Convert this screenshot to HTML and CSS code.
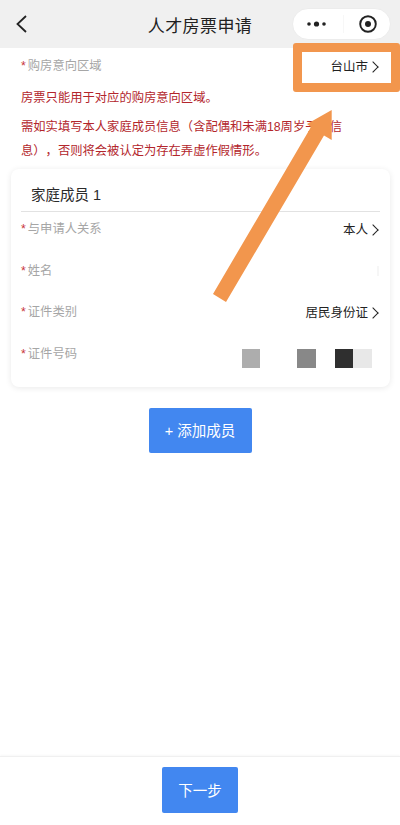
FILE: index.html
```html
<!DOCTYPE html>
<html lang="zh-CN">

<head>
    <meta charset="UTF-8">
    <meta name="viewport" content="width=device-width, initial-scale=1.0">
    <title>人才房票申请</title>
    <link rel="stylesheet" href="styles.css">
</head>

<body>
    <div class="navbar">
        <svg class="back" width="14" height="20" viewBox="0 0 14 20">
            <path d="M11 2 L2.5 10 L11 18" fill="none" stroke="#222" stroke-width="1.8" />
        </svg>
        <div class="navtitle">人才房票申请</div>
        <div class="capsule">
            <svg width="22" height="8" viewBox="0 0 22 8">
                <circle cx="3" cy="4" r="1.8" fill="#222" />
                <circle cx="10.5" cy="4" r="2.6" fill="#222" />
                <circle cx="18" cy="4" r="1.8" fill="#222" />
            </svg>
            <span class="capline"></span>
            <svg width="20" height="20" viewBox="0 0 20 20">
                <circle cx="10" cy="10" r="7.8" fill="none" stroke="#222" stroke-width="1.9" />
                <circle cx="10" cy="10" r="3" fill="#222" />
            </svg>
        </div>
    </div>

    <div class="content">
        <div class="row regionrow">
            <div class="label"><span class="star">*</span>购房意向区域</div>
            <div class="value">台山市<span class="arrow"></span></div>
        </div>
        <p class="notice first">房票只能用于对应的购房意向区域。</p>
        <p class="notice">需如实填写本人家庭成员信息（含配偶和未满18周岁子女信息），否则将会被认定为存在弄虚作假情形。</p>

        <div class="card">
            <div class="cardtitle">家庭成员 1</div>
            <div class="row">
                <div class="label"><span class="star">*</span>与申请人关系</div>
                <div class="value">本人<span class="arrow"></span></div>
            </div>
            <div class="row">
                <div class="label"><span class="star">*</span>姓名</div>
                <span class="faint"></span>
            </div>
            <div class="row">
                <div class="label"><span class="star">*</span>证件类别</div>
                <div class="value">居民身份证<span class="arrow"></span></div>
            </div>
            <div class="row">
                <div class="label"><span class="star">*</span>证件号码</div>
                <div class="mosaic">
                    <span class="block b1"></span>
                    <span class="block b2"></span>
                    <span class="block b3"></span>
                    <span class="block b4"></span>
                </div>
            </div>
        </div>

        <div class="addwrap">
            <button class="btn addbtn">+ 添加成员</button>
        </div>
    </div>

    <div class="footer">
        <button class="btn nextbtn">下一步</button>
    </div>

    <!-- 标注：橙色框和箭头 -->
    <div class="markbox"></div>
    <svg class="markarrow" width="400" height="825" viewBox="0 0 400 825">
        <polygon points="331.7,110 331.7,140 324,135.5 226,302 213,294 311,127 307,124" fill="#f2964d" />
    </svg>
</body>

</html>
```

FILE: styles.css
```css
* {
    box-sizing: border-box;
}

body {
    margin: 0;
    width: 400px;
    height: 825px;
    position: relative;
    overflow: hidden;
    background: #fff;
    font-family: "Liberation Sans", "Noto Sans CJK SC", sans-serif;
    text-spacing-trim: space-all;
    display: flex;
    flex-direction: column;
}

.navbar {
    height: 48px;
    background: #f0f0f0;
    display: flex;
    align-items: center;
    justify-content: space-between;
    padding: 0 9px 0 15px;
    position: relative;
}

.navtitle {
    position: absolute;
    left: 0;
    right: 0;
    text-align: center;
    font-size: 17px;
    letter-spacing: 0.4px;
    color: #222;
}

.capsule {
    position: relative;
    width: 99px;
    height: 32px;
    background: #fff;
    border: 1px solid #ececec;
    border-radius: 16px;
    display: flex;
    align-items: center;
    justify-content: space-between;
    padding: 0 12px 0 13px;
    margin-top: -1px;
}

.capline {
    width: 1px;
    height: 18px;
    background: #f7f7f7;
}

.content {
    flex: 1;
    padding: 8px 10px 0;
}

.row {
    display: flex;
    justify-content: space-between;
    align-items: flex-start;
    height: 41.5px;
    padding: 7px 12px 0 10px;
}

.regionrow {
    height: 24px;
    padding: 1px 12px 0 11px;
}

.label {
    font-size: 12.3px;
    line-height: 18px;
    color: #a6a6a6;
}

.star {
    color: #c8343a;
    margin-right: 2px;
}

.value {
    font-size: 12.5px;
    line-height: 20px;
    color: #222;
    display: flex;
    align-items: center;
}

.arrow {
    width: 8px;
    height: 8px;
    border-top: 1px solid #222;
    border-right: 1px solid #222;
    transform: rotate(45deg);
    margin: 0 1.5px 0 0.5px;
}

.notice {
    margin: 0;
    padding: 0 40px 0 11px;
    font-size: 12.3px;
    line-height: 24px;
    color: #b3262c;
}

.first {
    margin-top: 5.5px;
    margin-bottom: 5px;
}

.card {
    margin: 6.5px 0 0 1px;
    height: 218px;
    background: #fff;
    border-radius: 8px;
    box-shadow: 0 1px 6px rgba(0, 0, 0, 0.09);
}

.cardtitle {
    margin: 0 10px;
    height: 43px;
    padding: 16px 0 0 10px;
    font-size: 14.5px;
    line-height: 20px;
    color: #2b2b2b;
    border-bottom: 1px solid #e2e2e2;
}

.card .row:nth-child(2) {
    height: 42.5px;
    padding-top: 8px;
}

.faint {
    width: 2px;
    height: 10px;
    margin: 4px -1px 0 0;
    background: #f6f6f6;
}

.mosaic {
    display: flex;
    margin: 4px 6px 0 0;
}

.block {
    height: 19px;
}

.b1 {
    width: 18px;
    background: #adadad;
    margin-right: 37px;
}

.b2 {
    width: 19px;
    background: #888;
    margin-right: 19px;
}

.b3 {
    width: 18px;
    background: #2f2f2f;
}

.b4 {
    width: 19px;
    background: #e8e8e8;
}

.addwrap {
    display: flex;
    justify-content: center;
    margin-top: 21px;
}

.btn {
    border: none;
    border-radius: 2px;
    background: #4287f0;
    color: #fff;
    font-family: inherit;
    font-size: 14.5px;
    padding: 0 0 2px;
}

.addbtn {
    width: 103px;
    height: 45px;
}

.footer {
    height: 69px;
    border-top: 1px solid #f0f0f0;
    box-shadow: 0 -1px 2px rgba(0, 0, 0, 0.03);
    display: flex;
    justify-content: center;
    padding-top: 10px;
}

.nextbtn {
    width: 76px;
    height: 46px;
}

.markbox {
    position: absolute;
    left: 293px;
    top: 43px;
    width: 107px;
    height: 49px;
    border: 9px solid #f2964d;
    border-radius: 3px;
}

.markarrow {
    position: absolute;
    left: 0;
    top: 0;
}
```
